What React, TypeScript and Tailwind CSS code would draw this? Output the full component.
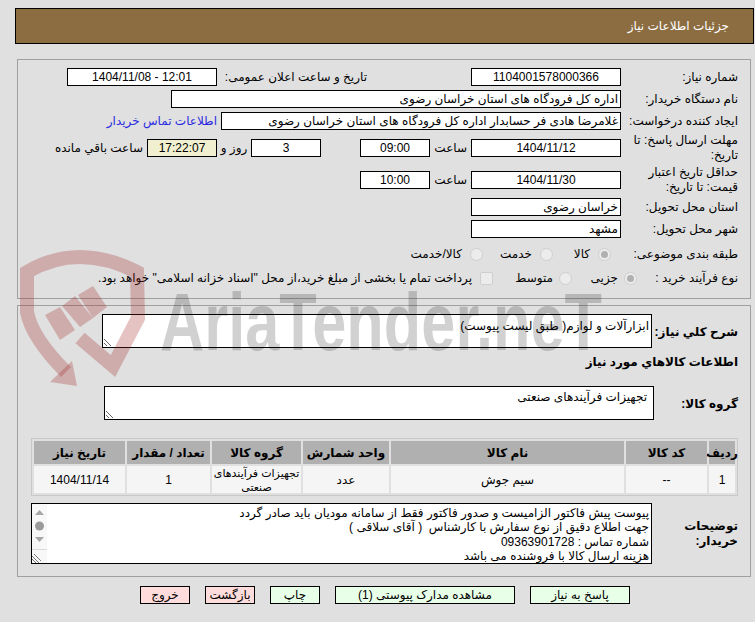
import React from 'react';

const font = { fontFamily: '"Liberation Sans", "DejaVu Sans", sans-serif' };

function Field({ w, center, bg, children }: { w: string; center?: boolean; bg?: string; children?: React.ReactNode }) {
  return (
    <div className={`h-[18px] shrink-0 border border-black px-[2px] leading-[16px] whitespace-nowrap overflow-hidden ${w} ${center ? 'text-center' : 'text-right'} ${bg ?? 'bg-white'}`}>
      {children}
    </div>
  );
}

function Radio({ checked }: { checked?: boolean }) {
  return (
    <span className="w-[13px] h-[13px] shrink-0 rounded-full border border-[#cfcfcf] bg-[#ececec] flex items-center justify-center">
      {checked && <span className="w-[7px] h-[7px] rounded-full bg-[#b0b0b0]" />}
    </span>
  );
}

function Label({ children, bold }: { children: React.ReactNode; bold?: boolean }) {
  return <div className={`w-[129px] shrink-0 pr-[12px] leading-[15px] ${bold ? 'font-bold' : ''}`}>{children}</div>;
}

function Btn({ w, pink, children }: { w: string; pink?: boolean; children: React.ReactNode }) {
  return (
    <button className={`h-[18px] border border-black leading-[16px] text-center ${w} ${pink ? 'bg-[#ffdcdc]' : 'bg-[#e8ffe8]'}`}>
      {children}
    </button>
  );
}

const headers = ['ردیف', 'کد کالا', 'نام کالا', 'واحد شمارش', 'گروه کالا', 'تعداد / مقدار', 'تاریخ نیاز'];

export default function App() {
  return (
    <div dir="rtl" style={font} className="relative w-[755px] h-[622px] overflow-hidden bg-[#e0e0e0] text-[12px] text-black">
      <div className="h-[8px]" />
      <div className="ml-[15px] mr-[1px] h-[36px] border border-black bg-[#8c6d42] text-white flex items-center pr-[24px]">
        جزئیات اطلاعات نیاز
      </div>

      {/* Main info */}
      <div className="mt-[15px] ml-[17px] mr-[4px] h-[240px] border border-[#a0a0a0] pt-[8px]">
        <div className="flex items-center h-[18px]">
          <Label>شماره نیاز:</Label>
          <Field w="w-[150px]" center>1104001578000366</Field>
          <div className="ms-[104px] w-[150px] shrink-0 whitespace-nowrap">تاریخ و ساعت اعلان عمومی:</div>
          <Field w="w-[150px]" center><span dir="ltr">1404/11/08 - 12:01</span></Field>
        </div>
        <div className="flex items-center h-[18px] mt-[4px]">
          <Label>نام دستگاه خریدار:</Label>
          <Field w="w-[450px]">اداره کل فرودگاه های استان خراسان رضوی</Field>
        </div>
        <div className="flex items-center h-[18px] mt-[4px]">
          <Label>ایجاد کننده درخواست:</Label>
          <Field w="w-[400px]">غلامرضا هادی فر حسابدار اداره کل فرودگاه های استان خراسان رضوی</Field>
          <a className="ms-[4px] text-[#2a2ae0] whitespace-nowrap">اطلاعات تماس خریدار</a>
        </div>
        <div className="flex items-center h-[18px] mt-[9px]">
          <Label>مهلت ارسال پاسخ: تا تاریخ:</Label>
          <Field w="w-[150px]" center>1404/11/12</Field>
          <div className="w-[41px] shrink-0 pr-[4px]">ساعت</div>
          <Field w="w-[70px]" center>09:00</Field>
          <div className="w-[39px] shrink-0" />
          <Field w="w-[70px]" center>3</Field>
          <div className="w-[34px] shrink-0 text-center">روز و</div>
          <Field w="w-[70px]" center bg="bg-[#f0f0d0]">17:22:07</Field>
          <div className="ms-[4px] whitespace-nowrap">ساعت باقي مانده</div>
        </div>
        <div className="flex items-center h-[18px] mt-[14px]">
          <Label>حداقل تاریخ اعتبار قیمت: تا تاریخ:</Label>
          <Field w="w-[150px]" center>1404/11/30</Field>
          <div className="w-[41px] shrink-0 pr-[4px]">ساعت</div>
          <Field w="w-[70px]" center>10:00</Field>
        </div>
        <div className="flex items-center h-[18px] mt-[9px]">
          <Label>استان محل تحویل:</Label>
          <Field w="w-[150px]">خراسان رضوی</Field>
        </div>
        <div className="flex items-center h-[18px] mt-[4px]">
          <Label>شهر محل تحویل:</Label>
          <Field w="w-[150px]">مشهد</Field>
        </div>
        <div className="flex items-center h-[18px] mt-[7px]">
          <Label>طبقه بندی موضوعی:</Label>
          <div className="flex items-center w-[150px] shrink-0 pr-[10px] gap-[8px]">
            <Radio checked /><span>کالا</span>
          </div>
          <div className="flex items-center gap-[8px] -ms-[82px] w-[70px] shrink-0"><Radio /><span>خدمت</span></div>
          <div className="flex items-center gap-[8px]"><Radio /><span className="whitespace-nowrap">کالا/خدمت</span></div>
        </div>
        <div className="flex items-center h-[18px] mt-[6px]">
          <Label>نوع فرآیند خرید :</Label>
          <div className="flex items-center w-[65px] shrink-0 gap-[6px] -ms-[16px]"><Radio checked /><span>جزیی</span></div>
          <div className="flex items-center w-[79px] shrink-0 gap-[6px]"><Radio /><span>متوسط</span></div>
          <span className="w-[13px] h-[13px] shrink-0 rounded-[2px] border border-[#cfcfcf] bg-[#ececec]" />
          <span className="ms-[8px] whitespace-nowrap">پرداخت تمام یا بخشی از مبلغ خرید،از محل "اسناد خزانه اسلامی" خواهد بود.</span>
        </div>
      </div>

      {/* Items */}
      <div className="mt-[6px] ml-[17px] mr-[4px] h-[272px] border border-[#a0a0a0] pt-[8px]">
        <div className="flex items-center h-[34px]">
          <div className="w-[98px] shrink-0 pr-[12px] font-bold whitespace-nowrap leading-[15px] mt-[3px]">شرح کلي نياز:</div>
          <textarea readOnly defaultValue="ابزارآلات و لوازم( طبق لیست پیوست)" className="w-[550px] h-[34px] shrink-0 border border-black bg-white px-[2px] pt-[4px] text-[12px] leading-[14px] outline-none" />
        </div>
        <div className="pr-[12px] mt-[7px] font-bold leading-[15px]">اطلاعات كالاهاي مورد نياز</div>
        <div className="flex items-center h-[34px] mt-[16px]">
          <div className="w-[96px] shrink-0 pr-[12px] font-bold whitespace-nowrap leading-[15px] mt-[3px]">گروه کالا:</div>
          <textarea readOnly defaultValue="تجهیزات فرآیندهای صنعتی" className="w-[550px] h-[34px] shrink-0 border border-black bg-white px-[6px] pt-[3px] text-[12px] leading-[14px] outline-none" />
        </div>
        <div className="mt-[18px] mr-[12px] ml-[13px] border border-[#c8c8c8] p-[2px] grid grid-cols-[26px_81px_233px_86px_89px_83px_91px] gap-[2px]">
          {headers.map((h) => (
            <div key={h} className="h-[23px] bg-[#b0b0b0] font-bold flex items-center justify-center whitespace-nowrap">{h}</div>
          ))}
          {['1', '--', 'سیم جوش', 'عدد'].map((c) => (
            <div key={c} className="h-[27px] bg-[#f5f5f5] flex items-center justify-center">{c}</div>
          ))}
          <div className="h-[27px] bg-[#f5f5f5] flex items-center justify-center text-center text-[11px] leading-[14px] whitespace-nowrap">
            <span>تجهیزات فرآیندهای<br />صنعتی</span>
          </div>
          <div className="h-[27px] bg-[#f5f5f5] flex items-center justify-center">1</div>
          <div className="h-[27px] bg-[#f5f5f5] flex items-center justify-center">1404/11/14</div>
        </div>
        <div className="flex mt-[7px]">
          <div className="w-[98px] shrink-0 pr-[12px] pt-[16px] font-bold leading-[15px]">توضیحات خریدار:</div>
          <div className="relative w-[621px] h-[61px] shrink-0 border border-black bg-white flex">
            <div className="flex-1 pr-[2px] pt-[2px] leading-[14.3px] whitespace-pre overflow-hidden">
              {'پیوست پیش فاکتور الزامیست و صدور فاکتور فقط از سامانه مودیان باید صادر گردد\nجهت اطلاع دقیق از نوع سفارش با کارشناس  ( آقای سلاقی )\nشماره تماس : 09363901728\nهزینه ارسال کالا با فروشنده می باشد'}
            </div>
            <div className="w-[15px] shrink-0 bg-[#f8f8f8] flex flex-col items-center">
              <svg width="15" height="45" viewBox="0 0 15 45" className="shrink-0">
                <path d="M3 11 L7.5 6 L12 11 Z M3 33 L7.5 38 L12 33 Z" fill="#a6a6a6" />
                <circle cx="7.5" cy="22" r="4.5" fill="#9a9a9a" />
              </svg>
              <div className="w-full border-t border-[#dcdcdc] flex-1 relative">
                <svg width="9" height="9" viewBox="0 0 9 9" className="absolute left-0 bottom-0">
                  <path d="M0 2 L7 9 M0 5 L4 9 M2 0 L9 7" stroke="#777" strokeWidth="1" />
                </svg>
              </div>
            </div>
          </div>
        </div>
      </div>

      {/* Actions */}
      <div className="flex gap-[15px] mt-[9px] pr-[125px]">
        <Btn w="w-[100px]">پاسخ به نیاز</Btn>
        <Btn w="w-[180px]">مشاهده مدارک پیوستی (1)</Btn>
        <Btn w="w-[50px]">چاپ</Btn>
        <Btn w="w-[50px]" pink>بازگشت</Btn>
        <Btn w="w-[50px]" pink>خروج</Btn>
      </div>

      {/* Watermark over the page */}
      <svg width="755" height="622" viewBox="0 0 755 622" className="absolute left-0 top-0 pointer-events-none">
        <g fill="none" stroke="#a02020" strokeOpacity="0.27" strokeWidth="14">
          <path d="M80 338 L113 366 L138 318 L137 272 Q78 242 27 272 L27 312 Q32 338 66 372" />
        </g>
        <path d="M50 382 L77 386 L72 361 Z" fill="#a02020" fillOpacity="0.27" />
        <g fill="#a02020" fillOpacity="0.27">
          <path d="M45 315 L60 307 L75 330 L60 340 Z" />
          <path d="M62 306 L75 296 L93 318 L80 327 Z" />
          <path d="M78 295 L93 286 L107 307 L93 318 Z" />
        </g>
        <text x="160" y="350" textLength="442" lengthAdjust="spacingAndGlyphs" direction="ltr" fontFamily="Liberation Sans, sans-serif" fontWeight="700" fontSize="82" fill="#000" fillOpacity="0.18">AriaTender.neT</text>
      </svg>
    </div>
  );
}
